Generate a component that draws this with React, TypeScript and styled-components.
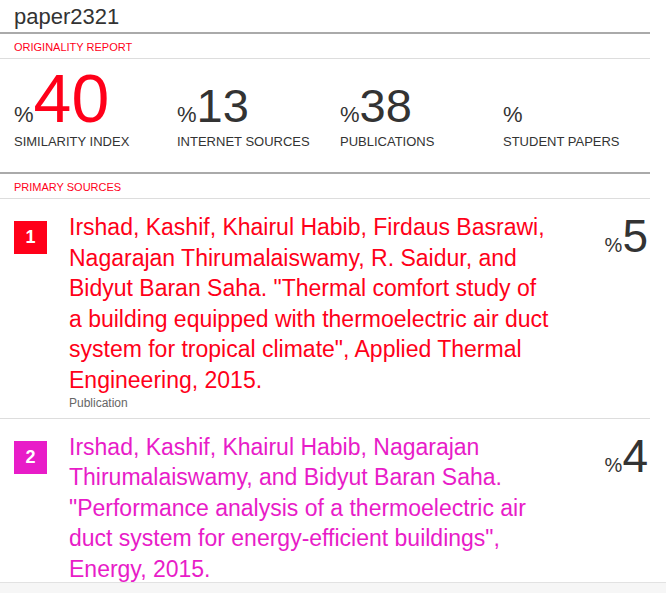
import React from "react";
import styled, { createGlobalStyle } from "styled-components";

const GlobalStyle = createGlobalStyle`
  html, body {
    margin: 0;
    padding: 0;
    background: #ffffff;
    font-family: "Liberation Sans", Arial, Helvetica, sans-serif;
  }
  #root {
    min-height: 100vh;
    display: flex;
    flex-direction: column;
  }
`;

const Page = styled.div`
  width: 650px;
  height: 582px;
  overflow: hidden;
  background: #fff;
  color: #333;
`;

const Footer = styled.div`
  flex: 1;
  background: #f6f6f6;
  border-top: 1px solid #e2e2e2;
`;

const Title = styled.h1`
  margin: 0;
  box-sizing: border-box;
  height: 34px;
  padding: 1px 14px 0;
  font-size: 22px;
  font-weight: normal;
  line-height: 31px;
  color: #333;
  border-bottom: 2px solid #aaa;
`;

const SectionHeader = styled.div`
  box-sizing: border-box;
  height: 25px;
  padding: 3px 14px 0;
  font-size: 11px;
  line-height: 21px;
  color: #ff0019;
  border-bottom: 1px solid #ddd;
`;

const Stats = styled.div`
  display: grid;
  grid-template-columns: repeat(4, 163px);
  grid-template-rows: auto auto;
  grid-auto-flow: column;
  align-items: baseline;
  align-content: start;
  box-sizing: border-box;
  height: 115px;
  padding: 5px 0 0 14px;
  border-bottom: 2px solid #aaa;
`;

const StatValue = styled.div`
  display: flex;
  align-items: baseline;
  line-height: 1;
`;

const Pct = styled.span<{ $size: number }>`
  font-size: ${(p) => p.$size}px;
  color: #333;
`;

const Num = styled.span<{ $size: number; $color: string }>`
  font-size: ${(p) => p.$size}px;
  color: ${(p) => p.$color};
`;

const StatLabel = styled.div`
  font-size: 13px;
  line-height: 16px;
  color: #333;
  margin-top: 2px;
`;

const Row = styled.div`
  display: grid;
  grid-template-columns: 33px 1fr auto;
  column-gap: 22px;
  align-items: start;
  padding: 13px 2px 8px 14px;
  border-bottom: 1px solid #ddd;
`;

const Badge = styled.div<{ $color: string }>`
  width: 33px;
  height: 33px;
  margin-top: 9px;
  background: ${(p) => p.$color};
  color: #fff;
  font-weight: bold;
  font-size: 18px;
  display: flex;
  align-items: center;
  justify-content: center;
`;

const Source = styled.div<{ $color: string }>`
  color: ${(p) => p.$color};
  font-size: 23px;
  line-height: 30.6px;
`;

const SourceLine = styled.div`
  white-space: nowrap;
`;

const SourceType = styled.div`
  font-size: 12px;
  line-height: 14px;
  color: #666;
`;

const SourcePct = styled.div`
  display: flex;
  align-items: baseline;
  line-height: normal;
  margin-top: -3px;
`;

type Stat = { value: string; label: string; size: number; color: string };

const stats: Stat[] = [
  { value: "40", label: "SIMILARITY INDEX", size: 68, color: "#ff0019" },
  { value: "13", label: "INTERNET SOURCES", size: 47, color: "#333" },
  { value: "38", label: "PUBLICATIONS", size: 47, color: "#333" },
  { value: "", label: "STUDENT PAPERS", size: 47, color: "#333" },
];

type SourceItem = { n: number; color: string; lines: string[]; type?: string; pct: string };

const sources: SourceItem[] = [
  {
    n: 1,
    color: "#ff0019",
    lines: [
      "Irshad, Kashif, Khairul Habib, Firdaus Basrawi,",
      "Nagarajan Thirumalaiswamy, R. Saidur, and",
      "Bidyut Baran Saha. \"Thermal comfort study of",
      "a building equipped with thermoelectric air duct",
      "system for tropical climate\", Applied Thermal",
      "Engineering, 2015.",
    ],
    type: "Publication",
    pct: "5",
  },
  {
    n: 2,
    color: "#e81cc8",
    lines: [
      "Irshad, Kashif, Khairul Habib, Nagarajan",
      "Thirumalaiswamy, and Bidyut Baran Saha.",
      "\"Performance analysis of a thermoelectric air",
      "duct system for energy-efficient buildings\",",
      "Energy, 2015.",
    ],
    pct: "4",
  },
];

export default function App() {
  return (
    <>
      <GlobalStyle />
      <Page>
        <Title>paper2321</Title>
        <SectionHeader>ORIGINALITY REPORT</SectionHeader>
        <Stats>
          {stats.map((s) => (
            <React.Fragment key={s.label}>
              <StatValue>
                <Pct $size={22}>%</Pct>
                {s.value && (
                  <Num $size={s.size} $color={s.color}>
                    {s.value}
                  </Num>
                )}
              </StatValue>
              <StatLabel>{s.label}</StatLabel>
            </React.Fragment>
          ))}
        </Stats>
        <SectionHeader>PRIMARY SOURCES</SectionHeader>
        {sources.map((src) => (
          <Row key={src.n}>
            <Badge $color={src.color}>{src.n}</Badge>
            <div>
              <Source $color={src.color}>
                {src.lines.map((l, i) => (
                  <SourceLine key={i}>{l}</SourceLine>
                ))}
              </Source>
              {src.type && <SourceType>{src.type}</SourceType>}
            </div>
            <SourcePct>
              <Pct $size={20}>%</Pct>
              <Num $size={46} $color="#333">
                {src.pct}
              </Num>
            </SourcePct>
          </Row>
        ))}
      </Page>
      <Footer />
    </>
  );
}
